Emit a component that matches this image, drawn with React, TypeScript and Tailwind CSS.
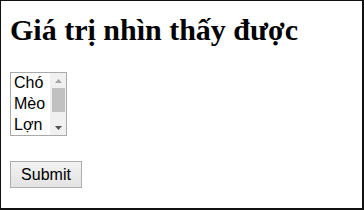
import React from "react";

export default function App() {
  return (
    <div className="w-[364px] h-[210px] bg-white border-t border-l border-r-2 border-b-2 border-[#111] overflow-hidden">
      <div className="pl-[9px] pt-[11px]">
        <h1 className="text-[30px] leading-[36px] font-bold text-black" style={{ fontFamily: '"Liberation Serif", "Times New Roman", serif' }}>
          Giá trị nhìn thấy được
        </h1>
        <div className="mt-[24px] flex" style={{ fontFamily: '"Liberation Sans", Arial, sans-serif' }}>
          <div className="w-[57px] h-[64px] border border-[#a9a9a9] flex bg-white">
            <div className="flex-1 flex flex-col pl-[3px] -mt-[1px] text-[16px] leading-[21px] text-black">
              <span>Chó</span>
              <span>Mèo</span>
              <span>Lợn</span>
            </div>
            <div className="w-[16px] bg-[#f0f0f0] flex flex-col items-center">
              <div className="h-[15px] flex items-center justify-center">
                <svg width="7" height="4" viewBox="0 0 7 4"><path d="M0 4 L3.5 0 L7 4 Z" fill="#a3a3a3" /></svg>
              </div>
              <div className="w-[13px] h-[24px] bg-[#c1c1c1]" />
              <div className="flex-1" />
              <div className="h-[15px] flex items-center justify-center">
                <svg width="7" height="4" viewBox="0 0 7 4"><path d="M0 0 L3.5 4 L7 0 Z" fill="#505050" /></svg>
              </div>
            </div>
          </div>
        </div>
        <div className="mt-[25px]" style={{ fontFamily: '"Liberation Sans", Arial, sans-serif' }}>
          <button className="h-[27px] w-[72px] border border-[#adadad] bg-gradient-to-b from-[#f2f2f2] to-[#e3e3e3] text-[16px] leading-[18px] text-black">
            Submit
          </button>
        </div>
      </div>
    </div>
  );
}
